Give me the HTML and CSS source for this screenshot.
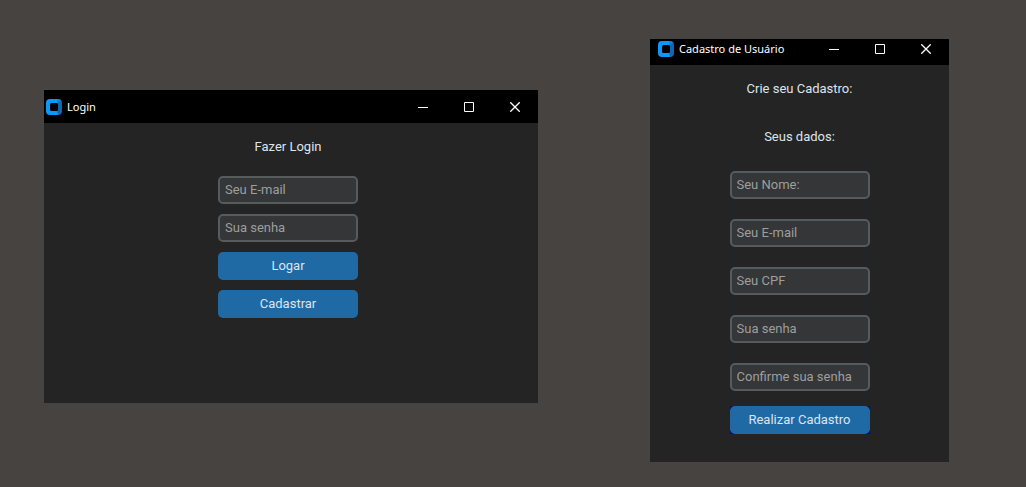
FILE: index.html
```html
<!DOCTYPE html>
<html lang="pt-BR">
<head>
<meta charset="utf-8">
<meta name="viewport" content="width=device-width, initial-scale=1">
<title>Login e Cadastro</title>
<link rel="stylesheet" href="styles.css">
</head>
<body>
<svg class="defs" width="0" height="0" aria-hidden="true">
  <symbol id="logo" viewBox="0 0 16 16">
    <path fill="#0a99fc" d="M4 0H12V16H4Q0 16 0 12V4Q0 0 4 0Z"/>
    <path fill="#1167b1" d="M12 0Q16 0 16 4V12Q16 16 12 16L11 12V4Z"/>
    <path fill="#0d84de" d="M11 0H12Q14 0 15 1.500L12 4H11Z"/>
    <rect x="4" y="4" width="8" height="8" rx="1.500" fill="#000"/>
  </symbol>
  <symbol id="minimize" viewBox="0 0 10 10"><path d="M0 5.500H10" fill="none" stroke="#fff"/></symbol>
  <symbol id="maximize" viewBox="0 0 10 10"><path d="M.5 .5H9.500V9.500H.5Z" fill="none" stroke="#fff"/></symbol>
  <symbol id="close" viewBox="0 0 10 10"><path d="M.3 .3L9.700 9.700M9.700 .3L.3 9.700" fill="none" stroke="#fff" stroke-width="1.300"/></symbol>
</svg>
<main class="desktop">
  <section class="window window-login" aria-labelledby="login-title">
    <header class="titlebar">
      <svg class="logo" aria-hidden="true"><use href="#logo"/></svg>
      <h1 class="title" id="login-title">Login</h1>
      <button class="control" type="button" aria-label="Minimizar"><svg class="glyph"><use href="#minimize"/></svg></button>
      <button class="control" type="button" aria-label="Maximizar"><svg class="glyph"><use href="#maximize"/></svg></button>
      <button class="control" type="button" aria-label="Fechar"><svg class="glyph"><use href="#close"/></svg></button>
    </header>
    <form class="form form-login">
      <h2 class="heading">Fazer Login</h2>
      <input class="field" type="email" aria-label="Seu E-mail" placeholder="Seu E-mail">
      <input class="field" type="password" aria-label="Sua senha" placeholder="Sua senha">
      <button class="action" type="button">Logar</button>
      <button class="action" type="button">Cadastrar</button>
    </form>
  </section>
  <section class="window window-signup" aria-labelledby="signup-title">
    <header class="titlebar titlebar-short">
      <svg class="logo" aria-hidden="true"><use href="#logo"/></svg>
      <h1 class="title" id="signup-title">Cadastro de Usuário</h1>
      <button class="control" type="button" aria-label="Minimizar"><svg class="glyph"><use href="#minimize"/></svg></button>
      <button class="control" type="button" aria-label="Maximizar"><svg class="glyph"><use href="#maximize"/></svg></button>
      <button class="control" type="button" aria-label="Fechar"><svg class="glyph"><use href="#close"/></svg></button>
    </header>
    <form class="form form-signup">
      <h2 class="heading">Crie seu Cadastro:</h2>
      <h3 class="heading">Seus dados:</h3>
      <input class="field" type="text" aria-label="Seu Nome" placeholder="Seu Nome:">
      <input class="field" type="email" aria-label="Seu E-mail" placeholder="Seu E-mail">
      <input class="field" type="text" aria-label="Seu CPF" placeholder="Seu CPF">
      <input class="field" type="password" aria-label="Sua senha" placeholder="Sua senha">
      <input class="field" type="password" aria-label="Confirme sua senha" placeholder="Confirme sua senha">
      <button class="action action-edged" type="button">Realizar Cadastro</button>
    </form>
  </section>
</main>
</body>
</html>
```
FILE: styles.css
```css
* { box-sizing: border-box; }

body {
  margin: 0;
  background: #474341;
  font-family: Roboto, "Liberation Sans", sans-serif;
  font-size: 13px;
  color: #dce4ee;
}

.defs { position: absolute; }

.desktop {
  position: relative;
  min-height: 100vh;
}

.window {
  position: absolute;
  background: #242424;
}

.window-login {
  left: 44px;
  top: 90px;
  width: 494px;
}

.window-signup {
  left: 650px;
  top: 39px;
  width: 299px;
}

.titlebar {
  display: flex;
  align-items: center;
  height: 33px;
  padding-left: 2px;
  background: #000;
}

.titlebar-short {
  height: 26px;
  padding: 0 0 6px 8px;
}

.logo {
  width: 16px;
  height: 16px;
}

.title {
  flex: 1;
  margin: 0 0 0 5px;
  font: 400 11px/16px "Noto Sans", "Open Sans", sans-serif;
  color: #fff;
  white-space: nowrap;
}

.control {
  display: grid;
  place-items: center;
  width: 46px;
  height: 20px;
  padding: 0;
  border: 0;
  background: none;
}

.glyph {
  width: 10px;
  height: 10px;
}

.form {
  display: flex;
  flex-direction: column;
  align-items: center;
}

.form-login {
  gap: 10px;
  padding: 10px 16px 85px 10px;
}

.form-login .heading { margin-bottom: 5px; }

.form-signup {
  gap: 20px;
  padding: 10px 10px 28px;
}

.form-signup .action { margin-top: -5px; }

.heading {
  margin: 0;
  font-size: 13px;
  font-weight: 400;
  line-height: 28px;
}

.field,
.action {
  width: 140px;
  height: 28px;
  border-radius: 5px;
  font: inherit;
}

.field {
  padding: 0 5px 2px;
  border: 2px solid #565b5e;
  background: #343638;
  color: #dce4ee;
}

.field::placeholder {
  color: #9e9e9e;
  opacity: 1;
}

.action {
  padding: 0 0 2px;
  border: 0;
  background: #1f6aa5;
  color: #dce4ee;
}

.action-edged {
  position: relative;
  isolation: isolate;
  border-radius: 2px;
  background: #00008b;
}

.action-edged::before {
  content: "";
  position: absolute;
  inset: 0;
  z-index: -1;
  border-radius: 5px;
  background: #1f6aa5;
}
```
